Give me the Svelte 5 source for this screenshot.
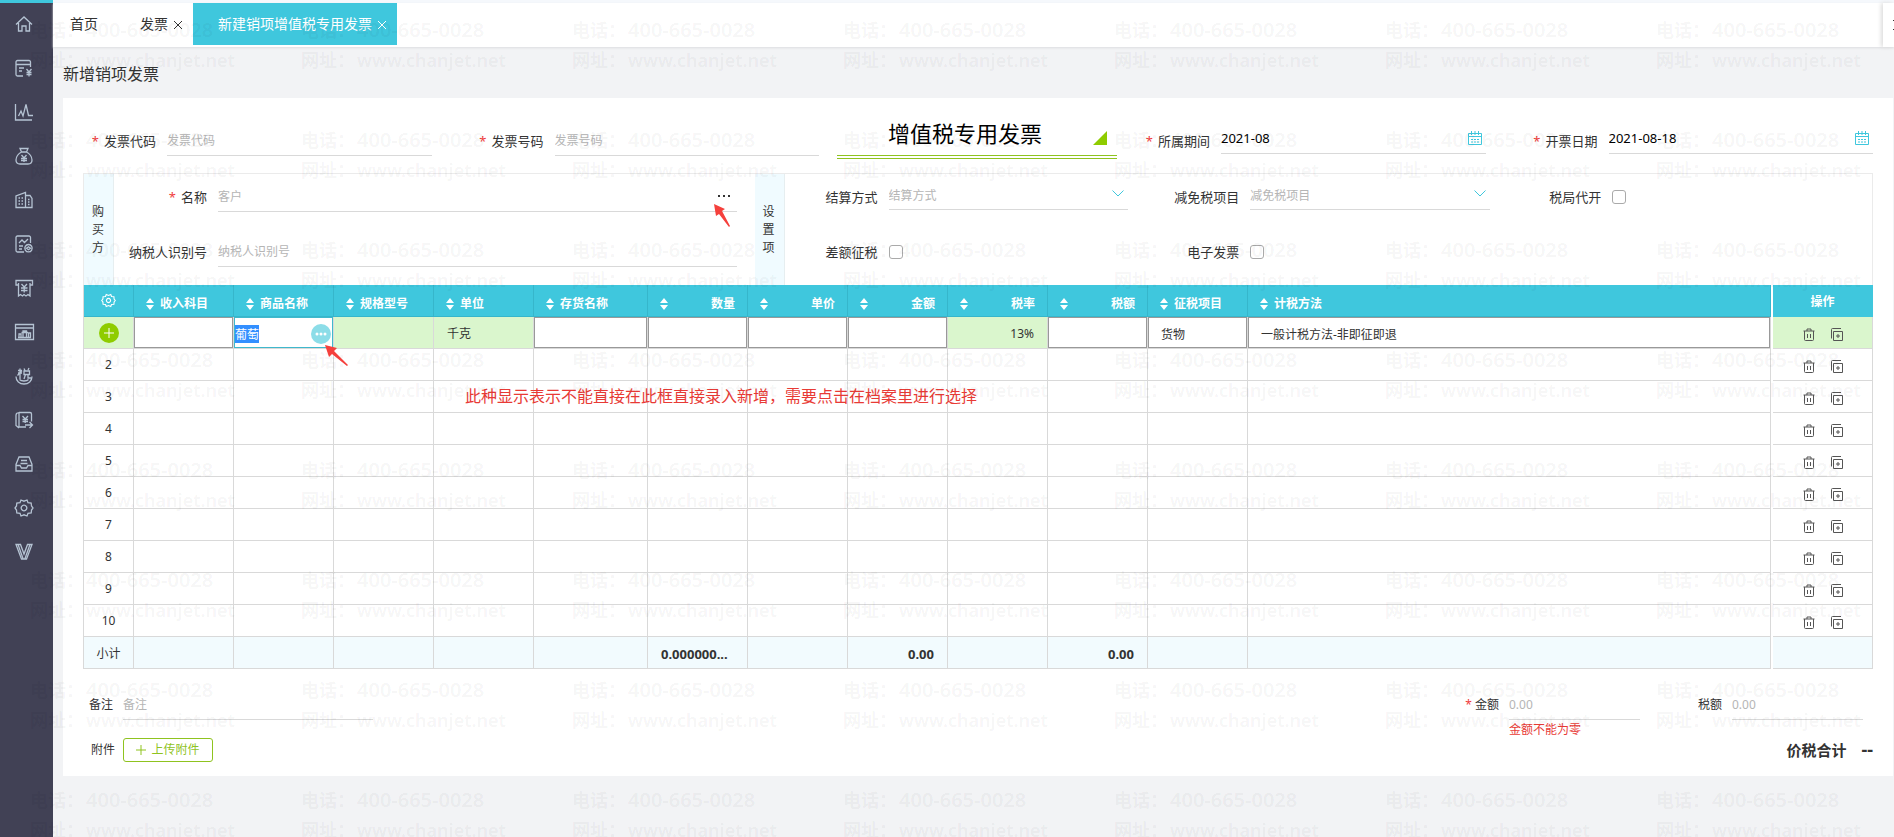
<script>
    // Sidebar icons, each drawn in an 18x18 box
    const menu = [
        { name: '首页', d: 'M1 9.500 9 2l8 7.500M3.500 8v8h3.500v-5h4v5h3.500V8' },
        { name: '发票', d: 'M15.500 8V3A1.500 1.500 0 0 0 14 1.500H2.500A1.500 1.500 0 0 0 1 3v12.500A1.500 1.500 0 0 0 2.500 17H8M1 5.500h14.500M4 9h5M4 12h3M11.500 10l2.500 3 2.500-3M14 13v4.500M11.500 13.500h5M11.500 15.500h5' },
        { name: '报表', d: 'M.5 1v16H17M3.500 13l2.500-5 2 5L11 1.500l2.500 11H18' },
        { name: '资金', d: 'M6.500 5 5 1.500h8L11.500 5M6.500 5h5c3 1.500 5.500 5 5.500 8 0 3-1.500 4-4 4H5c-2.500 0-4-1-4-4 0-3 2.500-6.500 5.500-8M6.500 8 9 11l2.500-3M9 11v4M6 11.500h6M6 13.500h6' },
        { name: '资产', d: 'M1 16.500V5l9.500-3.500v15zM10.500 4.500H15l2 3v9h-6.500M3.500 7H5M6.500 7H8M3.500 10H5M6.500 10H8M3.500 13H5M6.500 13H8M13 8.500h1.500M13 11h1.500M13 13.500h1.500' },
        { name: '核算', d: 'M15.500 8V2.500A1.500 1.500 0 0 0 14 1H2.500A1.500 1.500 0 0 0 1 2.500v13A1.500 1.500 0 0 0 2.500 17H9M4 8l3-3 2.500 2.500L13 4M4 11h4M4 14h3M13.500 9.500a3.700 3.700 0 1 0 .01 0M11.500 13.200l2-1.500 2 1.500-2 1.500z' },
        { name: '票据', d: 'M3.500 6H1V1.500h16.500V6H15M3.500 4v13l2-1.500 2 1.500 1.500-1.500 2 1.500 2-1.500 2 1.500V4M6.500 5 9.200 8 12 5M9.200 8v5.500M6 9h6.500M6 11.500h6.500' },
        { name: '工资', d: 'M.5 1.500h18v15H.5zM.5 5h18M4 14.500V11h2v3.500M8 14.500V8h3.500v6.500M13.500 14.500V10h2v4.500M3 14.500h13M6.500 9.500h6.500' },
        { name: '税务', d: 'M1 9.500c0 4.500 3.500 7.500 8 7.500s8-3 8-7.500M4.500 12.500c2 2 7 2 9 0M3 3.500h4M5 1.500V12M3 6h4M7 3.500l-4.500 5M9 1.500l1 2M14 1l-1 2M9 4h5.500v3.500H9zM10.500 7.500 9 12M13 7.500V11h3' },
        { name: '结账', d: 'M4 1.500h11A1.500 1.500 0 0 1 16.500 3v7.500M4 1.500V16h7M4 1.500 1.500 2.500 1 4v10.500L4 17M7.500 5l2.700 3L13 5M10.200 8v4M7.500 8.500H13M7.500 10.500H13M10 14h7M14.500 11l3 3-3 3' },
        { name: '归档', d: 'M4 2h10l3 7.500v6.500H1V9.500zM1 10.500h4l1.500 2.500h5l1.500-2.500h4M6 5.500h6M5.500 8.500h7' },
        { name: '设置', d: 'M6 1 9 2.200 12 1l1 2.700 3.200.3.300 3L18 9l-1.500 2-.3 3-3.200.3L12 17l-3-1.200L6 17l-1-2.700-3.200-.3-.3-3L0 9l1.500-2 .3-3L5 3.700zM9 6.200a2.800 2.800 0 1 0 .01 0' },
        { name: '会员', d: 'M1 1.500h4.500L9 11l3.500-9.500H17L11.500 16h-5zM3 1.500 8 15.500M15 1.500 10 15.500' }
    ]

    // Grid columns: w is the width, no w takes what is left
    const columns = [
        { title: '收入科目', w: 100, edit: true },
        { title: '商品名称', w: 100, product: true },
        { title: '规格型号', w: 100, value: '' },
        { title: '单位', w: 100, value: '千克' },
        { title: '存货名称', w: 114, edit: true },
        { title: '数量', w: 100, right: true, edit: true, sum: '0.000000...' },
        { title: '单价', w: 100, right: true, edit: true },
        { title: '金额', w: 100, right: true, edit: true, sum: '0.00' },
        { title: '税率', w: 100, right: true, value: '13%' },
        { title: '税额', w: 100, right: true, edit: true, sum: '0.00' },
        { title: '征税项目', w: 100, edit: true, value: '货物' },
        { title: '计税方法', edit: true, value: '一般计税方法-非即征即退' }
    ]

    const rows = [2, 3, 4, 5, 6, 7, 8, 9, 10]
    const marks = Array(56)

    let product = $state('葡萄')
    let productEl

    // Start with the product name selected
    $effect(() => {
        productEl.focus()
        productEl.select()
    })
</script>

{#snippet gear()}
    <svg width="15" height="15" viewBox="-1 -1 20 20" class="line"><path d={menu[11].d} /></svg>
{/snippet}

{#snippet calendar()}
    <button class="pick" aria-label="选择日期">
        <svg width="14" height="14" viewBox="0 0 14 14" class="line">
            <path d="M.5 2.500h13v11H.5zM.5 5.500h13M3.500 0v4M7 0v4M10.500 0v4M3 8.500h2M6 8.500h2M9 8.500h2M3 11h2M6 11h2M9 11h2" />
        </svg>
    </button>
{/snippet}

{#snippet chevron()}
    <svg class="chevron line" width="12" height="7" viewBox="0 0 12 7"><path d="M.5.5 6 6 11.500.5" /></svg>
{/snippet}

{#snippet actions()}
    <div class="actions">
        <button aria-label="删除">
            <svg width="12" height="13" viewBox="0 0 12 13" class="line">
                <path d="M.5 3h11M4 3V1h4v2M1.500 3v8.500a1 1 0 0 0 1 1h7a1 1 0 0 0 1-1V3M4.500 6v4M7.500 6v4" />
            </svg>
        </button>
        <button aria-label="复制">
            <svg width="12" height="13" viewBox="0 0 12 13" class="line">
                <path d="M2.500 3.500h9v9h-9zM.5 10.500v-9a1 1 0 0 1 1-1h8.500M7 6v4M5 8h4" />
            </svg>
        </button>
    </div>
{/snippet}

<div class="page">
    <nav class="sidebar">
        {#each menu as item}
            <a href="#{item.name}" aria-label={item.name}>
                <svg width="18" height="18" viewBox="0 0 18 18" class="line"><path d={item.d} /></svg>
            </a>
        {/each}
    </nav>

    <div class="main">
        <div class="tabs">
            <button class="tab">首页</button>
            <button class="tab">发票
                <svg width="8" height="8" viewBox="0 0 8 8" class="line"><path d="M0 0l8 8M8 0 0 8" /></svg>
            </button>
            <button class="tab active">新建销项增值税专用发票
                <svg width="8" height="8" viewBox="0 0 8 8" class="line"><path d="M0 0l8 8M8 0 0 8" /></svg>
            </button>
            <button class="more" aria-label="更多">
                <svg width="1" height="11" viewBox="0 0 1 11"><path d="M0 0h1v1H0zM0 9h1v1H0z" /></svg>
            </button>
        </div>

        <h1>新增销项发票</h1>

        <div class="card">
            <div class="head">
                <label class="req" for="code">发票代码</label>
                <input id="code" class="field code" placeholder="发票代码">
                <label class="req" for="number">发票号码</label>
                <input id="number" class="field code" placeholder="发票号码">
                <div class="kind">
                    <select aria-label="发票类型"><option>增值税专用发票</option></select>
                </div>
                <label class="req" for="period">所属期间</label>
                <div class="date"><input id="period" class="field" value="2021-08">{@render calendar()}</div>
                <label class="req" for="day">开票日期</label>
                <div class="date"><input id="day" class="field" value="2021-08-18">{@render calendar()}</div>
            </div>

            <div class="panels">
                <section class="buyer">
                    <h2>购买方</h2>
                    <div class="fields">
                        <label class="req" for="name">名称</label>
                        <div class="customer">
                            <input id="name" class="field" placeholder="客户">
                            <button class="dots" aria-label="选择客户">
                                <svg width="12" height="4" viewBox="0 0 12 4"><path d="M0 1h2v2H0zM5 1h2v2H5zM10 1h2v2h-2z" /></svg>
                            </button>
                            <svg class="arrow" width="16" height="24" viewBox="0 0 16 24">
                                <path d="M0 0l11 5-3 2 8 15-1 1L5 10l-3 2z" />
                            </svg>
                        </div>
                        <label for="taxno">纳税人识别号</label>
                        <input id="taxno" class="field" placeholder="纳税人识别号">
                    </div>
                </section>
                <section class="settings">
                    <h2>设置项</h2>
                    <div class="fields">
                        <label for="settle">结算方式</label>
                        <div class="drop">
                            <select id="settle" class="field"><option>结算方式</option></select>
                            {@render chevron()}
                        </div>
                        <label for="relief">减免税项目</label>
                        <div class="drop">
                            <select id="relief" class="field"><option>减免税项目</option></select>
                            {@render chevron()}
                        </div>
                        <label for="bureau">税局代开</label>
                        <input id="bureau" type="checkbox">
                        <label for="diff">差额征税</label>
                        <input id="diff" type="checkbox">
                        <label for="einvoice">电子发票</label>
                        <input id="einvoice" type="checkbox">
                    </div>
                </section>
            </div>

            <div class="grid">
                <table class="items">
                    <colgroup>
                        <col style="width: 50px">
                        {#each columns as col}
                            <col style={col.w ? `width: ${col.w}px` : ''}>
                        {/each}
                    </colgroup>
                    <thead>
                        <tr>
                            <th class="num">{@render gear()}</th>
                            {#each columns as col}
                                <th>
                                    <div class="title" class:right={col.right}>
                                        <svg width="8" height="12" viewBox="0 0 8 12"><path d="M4 0l4 5H0zM4 12l4-5H0z" /></svg>
                                        {col.title}
                                    </div>
                                </th>
                            {/each}
                        </tr>
                    </thead>
                    <tbody>
                        <tr class="current">
                            <td class="num">
                                <button class="add" aria-label="增行">
                                    <svg width="10" height="10" viewBox="0 0 10 10" class="line"><path d="M5 0v10M0 5h10" /></svg>
                                </button>
                            </td>
                            {#each columns as col}
                                {#if col.product}
                                    <td class="product">
                                        <input aria-label={col.title} bind:value={product} bind:this={productEl}>
                                        <button class="browse" aria-label="选择商品">
                                            <svg width="12" height="4" viewBox="0 0 12 4"><circle cx="2" cy="2" r="1.500" /><circle cx="6" cy="2" r="1.500" /><circle cx="10" cy="2" r="1.500" /></svg>
                                        </button>
                                        <svg class="arrow" width="24" height="21" viewBox="0 0 24 21">
                                            <path d="M0 0l12 3-3 3 14 14-1 1L7 9l-3 3z" />
                                        </svg>
                                    </td>
                                {:else if col.edit}
                                    <td class="edit"><input aria-label={col.title} class:right={col.right} value={col.value ?? ''}></td>
                                {:else}
                                    <td class:right={col.right}>{col.value}</td>
                                {/if}
                            {/each}
                        </tr>
                        {#each rows as row}
                            <tr>
                                <td class="num">{row}</td>
                                {#each columns as col}<td></td>{/each}
                            </tr>
                        {/each}
                    </tbody>
                    <tfoot>
                        <tr>
                            <td class="num">小计</td>
                            {#each columns as col}
                                <td class:right={col.sum === '0.00'}>{col.sum ?? ''}</td>
                            {/each}
                        </tr>
                    </tfoot>
                </table>

                <table class="ops">
                    <thead>
                        <tr><th>操作</th></tr>
                    </thead>
                    <tbody>
                        <tr class="current"><td>{@render actions()}</td></tr>
                        {#each rows as row}
                            <tr><td>{@render actions()}</td></tr>
                        {/each}
                    </tbody>
                    <tfoot>
                        <tr><td></td></tr>
                    </tfoot>
                </table>

                <p class="note">此种显示表示不能直接在此框直接录入新增，需要点击在档案里进行选择</p>
            </div>

            <div class="bottom">
                <div class="extra">
                    <label for="memo">备注</label>
                    <input id="memo" class="field" placeholder="备注">
                    <span>附件</span>
                    <button class="upload">
                        <svg width="10" height="10" viewBox="0 0 10 10" class="line"><path d="M5 0v10M0 5h10" /></svg>
                        上传附件
                    </button>
                </div>
                <div class="sums">
                    <div class="amounts">
                        <label class="req" for="amount">金额</label>
                        <input id="amount" class="field" placeholder="0.00">
                        <label for="tax">税额</label>
                        <input id="tax" class="field" placeholder="0.00">
                        <p class="error">金额不能为零</p>
                    </div>
                    <div class="total">价税合计<span>--</span></div>
                </div>
            </div>
        </div>
    </div>

    <div class="watermark" aria-hidden="true">
        {#each marks as mark}
            <div class="mark">
                <span>电话：</span><span class="phone">400-665-0028</span>
                <span>网址：</span><span>www.chanjet.net</span>
            </div>
        {/each}
    </div>
</div>

<style>
    :global(body) {
        margin: 0;
        background: #f2f3f5;
    }

    .page, .page * {
        box-sizing: border-box;
    }

    .page {
        position: relative;
        display: flex;
        min-height: 100vh;
        font: 12px/16px "Noto Sans", "Noto Sans CJK SC", sans-serif;
        color: #333;
    }

    button, input, select {
        margin: 0;
        padding: 0;
        border: 0;
        border-radius: 0;
        outline: 0;
        background: none;
        font: inherit;
        color: inherit;
    }

    svg {
        display: block;
        flex: none;
        fill: currentColor;
    }

    .line {
        fill: none;
        stroke: currentColor;
        stroke-width: 1;
    }

    /* sidebar */
    .sidebar {
        flex: 0 0 53px;
        border-top: 3px solid #3fc7dd;
        background: #414155;
        color: #b5c3d3;
    }

    .sidebar a {
        display: flex;
        align-items: center;
        height: 44px;
        padding: 0 0 2px 15px;
        color: inherit;
    }

    .sidebar .line {
        stroke-width: 1.300;
        overflow: visible;
    }

    .main {
        flex: 1;
        min-width: 0;
        border-top: 3px solid #f5f8fc;
    }

    /* tabs */
    .tabs {
        display: flex;
        height: 44px;
        padding-left: 17px;
        background: #fff;
        box-shadow: 0 1px 2px #dcdee0;
    }

    .tab {
        display: flex;
        align-items: center;
        gap: 6px;
        height: 42px;
        margin-right: 42px;
        font-size: 14px;
    }

    .tab:nth-child(2) {
        margin-right: 11px;
    }

    .tab .line {
        margin-top: 2px;
        overflow: visible;
    }

    .tab.active {
        padding: 0 11px 0 25px;
        background: #3fc7dd;
        color: #fff;
    }

    .more {
        display: flex;
        justify-content: flex-end;
        align-items: center;
        width: 11px;
        margin-left: auto;
        box-shadow: -2px 0 4px #ddd;
    }

    h1 {
        margin: 15px 0 12px 10px;
        font-size: 16px;
        line-height: 24px;
        font-weight: 400;
    }

    .card {
        margin: 0 1px 0 10px;
        padding: 13px 20px 14px;
        background: #fff;
    }

    /* form fields */
    .field {
        width: 100%;
        height: 31px;
        border-bottom: 1px solid #d9d9d9;
    }

    .field::placeholder {
        color: #b5b5b5;
        opacity: 1;
    }

    label {
        padding-right: 11px;
        font-size: 13px;
        line-height: 24px;
        text-align: right;
        white-space: nowrap;
    }

    .req::before {
        content: "*";
        margin-right: 5px;
        color: #f03c3c;
    }

    .head {
        display: grid;
        grid-template-columns: 84px 1fr 123px 1fr 18px 280px 104px 1fr 123px 1fr;
        align-items: end;
        margin-bottom: 14px;
    }

    .head label {
        margin-bottom: 6px;
    }

    .code {
        margin-bottom: 3px;
    }

    .date {
        position: relative;
        margin-bottom: 5px;
        font-size: 13px;
        color: #000;
    }

    .date .field {
        display: block;
    }

    .pick {
        position: absolute;
        top: 8px;
        right: 4px;
        color: #3fc7dd;
    }

    .kind {
        position: relative;
        grid-column: 6;
        border-bottom: 4px double #8fc31f;
    }

    .kind select {
        display: block;
        width: 100%;
        height: 44px;
        padding-left: 51px;
        appearance: none;
        font-size: 22px;
        line-height: 40px;
        color: #000;
    }

    .kind::after {
        content: "";
        position: absolute;
        right: 10px;
        bottom: 10px;
        border: 7px solid #8fcc00;
        border-top-color: transparent;
        border-left-color: transparent;
    }

    .panels {
        display: grid;
        grid-template-columns: 3fr 5fr;
        height: 112px;
        border: 1px solid #ebebeb;
        border-bottom: 0;
    }

    .panels section {
        display: flex;
    }

    h2 {
        display: flex;
        align-items: center;
        width: 30px;
        margin: 0;
        padding: 0 8px;
        border-right: 1px solid #e6eef0;
        background: #f0fbff;
        font-size: 12px;
        line-height: 18px;
        font-weight: 400;
    }

    .fields {
        flex: 1;
        display: grid;
        grid-template-columns: 104px 1fr;
        grid-auto-rows: 31px;
        row-gap: 24px;
        align-items: center;
        padding-top: 7px;
    }

    .buyer .fields {
        padding-right: 18px;
    }

    .settings .fields {
        grid-template-columns: 104px 120fr 122px 120fr 122px 130fr;
    }

    .customer, .drop {
        position: relative;
    }

    .dots {
        position: absolute;
        top: 13px;
        right: 7px;
    }

    .arrow {
        position: absolute;
        z-index: 2;
        fill: #f5403c;
    }

    .customer .arrow {
        top: 23px;
        right: 7px;
    }

    .drop {
        align-self: start;
    }

    .drop .field {
        display: block;
        height: 29px;
        padding-top: 2px;
        appearance: none;
        color: #b5b5b5;
    }

    .chevron {
        position: absolute;
        top: 9px;
        right: 4px;
        color: #3fc7dd;
        pointer-events: none;
    }

    input[type="checkbox"] {
        width: 14px;
        height: 14px;
        border: 1px solid #aaa;
        border-radius: 3px;
        appearance: none;
        background: #fff;
    }

    /* item grid */
    .grid {
        position: relative;
        display: flex;
        gap: 2px;
    }

    table {
        border-collapse: separate;
        border-spacing: 0;
        table-layout: fixed;
    }

    .items {
        flex: 1;
        min-width: 0;
        width: 0;
        border-left: 1px solid #d9d9d9;
    }

    .ops {
        width: 100px;
    }

    th, td {
        height: 32px;
        padding: 2px 13px 0;
        border-right: 1px solid #d9d9d9;
        border-bottom: 1px solid #d9d9d9;
        white-space: nowrap;
        text-align: left;
    }

    th {
        padding: 2px 12px 0;
        border-color: #36b6cb;
        background: #3fc7dd;
        color: #fff;
    }

    .ops th {
        border-color: #3fc7dd;
        text-align: center;
    }

    th.num, td.num {
        padding: 0;
        text-align: center;
    }

    .num svg {
        margin: auto;
    }

    th .line {
        stroke-width: 1.500;
    }

    .title {
        display: flex;
        align-items: center;
        gap: 6px;
        padding-top: 4px;
    }

    .title.right {
        justify-content: space-between;
    }

    td.right, input.right {
        text-align: right;
    }

    .current td {
        background: #daf6cd;
    }

    .current td.edit, .current td.product {
        padding: 0;
        background: #fff;
    }

    td input {
        display: block;
        width: 100%;
        height: 31px;
        padding: 2px 12px 0;
        border: 1px solid #999;
    }

    .product {
        position: relative;
    }

    .product input {
        padding: 2px 0 0;
        border-color: #3fb8cc;
    }

    .product input::selection {
        background: #338fff;
        color: #fff;
    }

    .add, .browse {
        display: flex;
        align-items: center;
        justify-content: center;
        width: 20px;
        height: 20px;
        margin: auto;
        border-radius: 50%;
        background: #8fcc00;
        color: #fff;
    }

    .browse {
        position: absolute;
        top: 7px;
        right: 2px;
        background: #8cdde8;
    }

    .product .arrow {
        top: 28px;
        left: 91px;
    }

    .actions {
        display: flex;
        justify-content: center;
        gap: 16px;
        padding-top: 2px;
        color: #555;
    }

    tfoot td {
        background: #f2fbfe;
        font-size: 13px;
        font-weight: 700;
    }

    tfoot td.num {
        padding-top: 2px;
        font-size: 12px;
        font-weight: 400;
    }

    .note {
        position: absolute;
        top: 99px;
        left: 382px;
        margin: 0;
        font-size: 16px;
        line-height: 24px;
        color: #e83a35;
    }

    /* below the grid */
    .bottom {
        display: flex;
        justify-content: space-between;
        padding-top: 20px;
    }

    .extra {
        display: grid;
        grid-template-columns: 34px 250px;
        grid-template-rows: 31px 24px;
        row-gap: 18px;
        align-items: center;
        padding-left: 6px;
    }

    .bottom label {
        padding-right: 10px;
        font-size: 12px;
    }

    .extra span {
        padding-left: 2px;
    }

    .upload {
        display: flex;
        align-items: center;
        justify-content: center;
        gap: 5px;
        width: 90px;
        height: 24px;
        border: 1px solid #8fc31f;
        border-radius: 3px;
        color: #8fc31f;
    }

    .amounts {
        display: grid;
        grid-template-columns: auto 131px 92px 131px;
        align-items: center;
        padding-right: 10px;
    }

    .amounts .req::before {
        margin-right: 3px;
    }

    .error {
        grid-column: 2;
        margin: 2px 0 0;
        color: #e83a35;
    }

    .total {
        font-size: 15px;
        line-height: 24px;
        font-weight: 700;
        text-align: right;
    }

    .total span {
        margin-left: 15px;
        font-size: 18px;
        line-height: 16px;
    }

    .watermark {
        position: absolute;
        inset: 0;
        z-index: 1;
        display: grid;
        grid-template-columns: repeat(7, 271px);
        grid-auto-rows: 110px;
        padding: 15px 0 0 30px;
        overflow: hidden;
        pointer-events: none;
        color: rgba(0, 0, 0, 0.05);
    }

    .mark {
        display: grid;
        grid-template-columns: 56px 1fr;
        grid-auto-rows: 30px;
        align-content: start;
        font-size: 18px;
        line-height: 30px;
        font-weight: 600;
        white-space: nowrap;
    }

    .phone {
        font-size: 20px;
    }
</style>
